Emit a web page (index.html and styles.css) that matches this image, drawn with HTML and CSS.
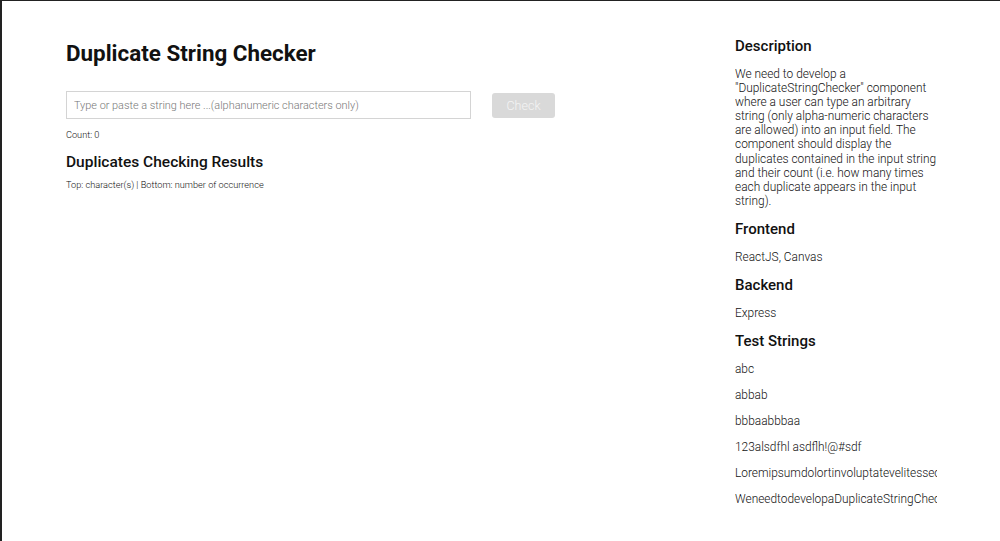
FILE: index.html
```html
<!DOCTYPE html>
<html>
<head>
<meta charset="utf-8">
<link rel="stylesheet" href="styles.css">
</head>
<body>
<div class="page">
  <main class="main">
    <h1 class="title">Duplicate String Checker</h1>
    <div class="form">
      <input class="input" type="text" placeholder="Type or paste a string here ...(alphanumeric characters only)">
      <button class="btn" disabled>Check</button>
    </div>
    <p class="count">Count: 0</p>
    <h2 class="subtitle">Duplicates Checking Results</h2>
    <p class="legend">Top: character(s) | Bottom: number of occurrence</p>
  </main>
  <aside class="side">
    <h3 class="side-h first">Description</h3>
    <p class="desc">We need to develop a "DuplicateStringChecker" component where a user can type an arbitrary string (only alpha-numeric characters are allowed) into an input field. The component should display the duplicates contained in the input string and their count (i.e. how many times each duplicate appears in the input string).</p>
    <h3 class="side-h">Frontend</h3>
    <p class="item">ReactJS, Canvas</p>
    <h3 class="side-h">Backend</h3>
    <p class="item">Express</p>
    <h3 class="side-h">Test Strings</h3>
    <p class="item">abc</p>
    <p class="item">abbab</p>
    <p class="item">bbbaabbbaa</p>
    <p class="item">123alsdfhl asdflh!@#sdf</p>
    <p class="item">Loremipsumdolortinvoluptatevelitesseclillumdoloreeufugiatnullapariatur</p>
    <p class="item">WeneedtodevelopaDuplicateStringCheckercomponent</p>
  </aside>
</div>
</body>
</html>
```

FILE: styles.css
```css
html, body {
  margin: 0;
  padding: 0;
  height: 100%;
}
body {
  font-family: Roboto, "Liberation Sans", sans-serif;
  color: #111;
  background: #fff;
  border-left: 2px solid #222;
  border-top: 1px solid #222;
  box-sizing: border-box;
  overflow: hidden;
}
.page {
  display: flex;
  justify-content: space-between;
}
.main {
  padding-left: 64px;
  padding-top: 38px;
}
.title {
  margin: 0;
  font-size: 22.4px;
  font-weight: 700;
  line-height: 28px;
}
.form {
  display: flex;
  align-items: center;
  gap: 21px;
  margin-top: 24px;
}
.input {
  width: 405px;
  height: 28px;
  box-sizing: border-box;
  border: 1px solid #d4d4d4;
  padding: 0 7px;
  font-family: Roboto, sans-serif;
  font-size: 10.9px;
  font-weight: 300;
  outline: none;
}
.input::placeholder {
  color: #777;
}
.btn {
  width: 63px;
  height: 25px;
  margin-top: 1px;
  background: #d9d9d9;
  border: none;
  border-radius: 3px;
  color: #f4f4f4;
  font-family: Roboto, sans-serif;
  font-size: 12.5px;
  font-weight: 300;
  padding: 0;
}
.count {
  margin: 10px 0 0;
  font-size: 9.2px;
  font-weight: 300;
  line-height: 12px;
}
.subtitle {
  margin: 11px 0 0;
  font-size: 15.5px;
  font-weight: 500;
  line-height: 20px;
}
.legend {
  margin: 7px 0 0;
  font-size: 9.2px;
  font-weight: 300;
  line-height: 12px;
}
.side {
  width: 202px;
  margin-right: 63px;
  padding-top: 35px;
  overflow: hidden;
}
.side-h {
  margin: 9px 0 0;
  font-size: 15px;
  font-weight: 500;
  line-height: 20px;
}
.side-h.first {
  margin-top: 0;
}
.desc {
  margin: 11px 0 0;
  font-size: 11.9px;
  font-weight: 300;
  line-height: 14.1px;
}
.desc + .side-h {
  margin-top: 11px;
}
.item {
  margin: 8px 0 0;
  font-size: 11.9px;
  font-weight: 300;
  line-height: 18px;
  white-space: nowrap;
  overflow: hidden;
}
.side-h + .item {
  margin-top: 9px;
}
```
